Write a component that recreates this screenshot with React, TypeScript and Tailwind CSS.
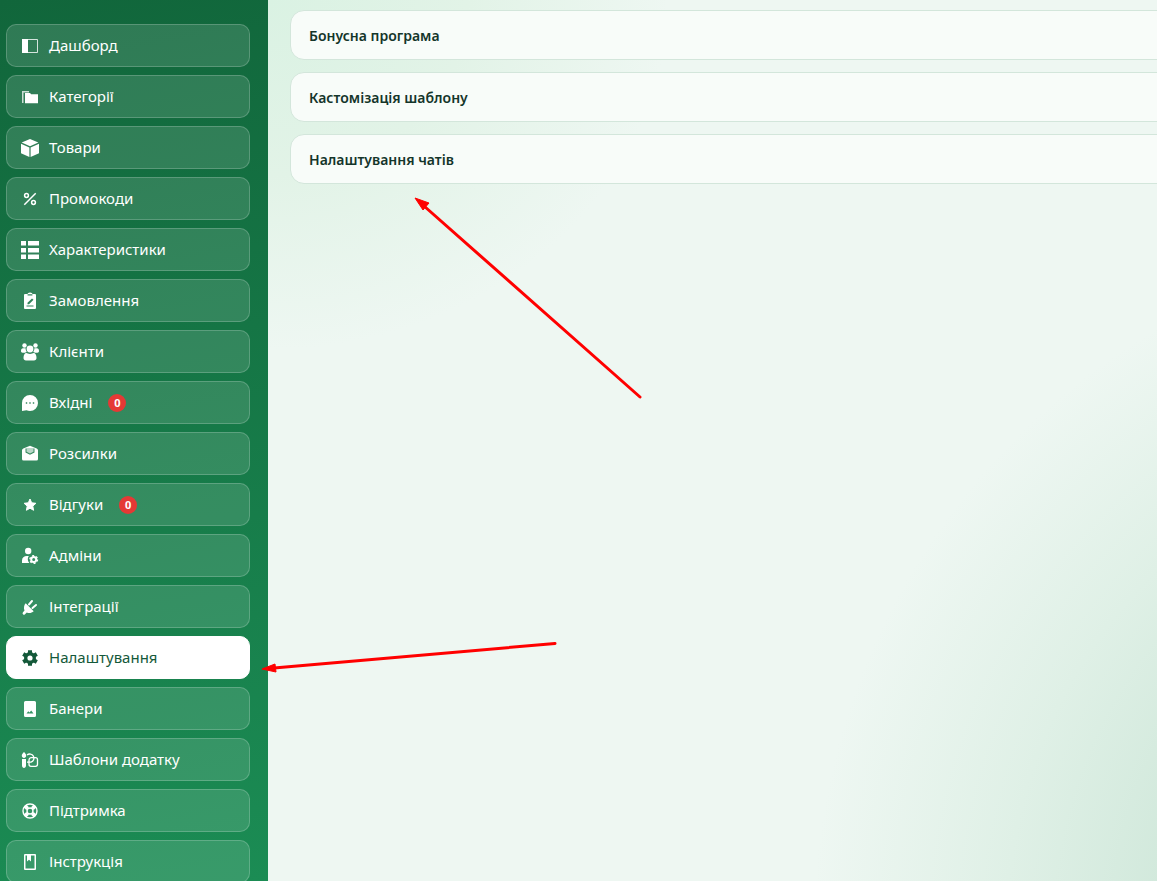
import { useState } from 'react'
import type { ReactNode } from 'react'
import clsx from 'clsx'

interface NavItem {
  id: string
  label: string
  icon: ReactNode
  badge?: number
}

// 18x18 glyph drawn with the current text color
function Glyph({ children }: { children: ReactNode }) {
  return (
    <svg viewBox="0 0 18 18" className="size-[18px]" fill="currentColor" aria-hidden="true">
      {children}
    </svg>
  )
}

const navItems: NavItem[] = [
  {
    id: 'dashboard',
    label: 'Дашборд',
    icon: (
      <Glyph>
        <path d="M1 2h6v14H1z" />
        <path d="M1.5 2.5h15v13h-15z" fill="none" stroke="currentColor" strokeOpacity=".8" />
      </Glyph>
    ),
  },
  {
    id: 'categories',
    label: 'Категорії',
    icon: (
      <Glyph>
        <path d="M1 3h7v1.500H2.500V15H1z" opacity=".75" />
        <path d="M4 5h5l1.200 1.300H17V15.300H4z" />
      </Glyph>
    ),
  },
  {
    id: 'products',
    label: 'Товари',
    icon: (
      <Glyph>
        <path d="M9 0l8.300 3.600L9 7.200.7 3.600zM0 4.800l8.400 3.600V18L0 14.200zM18 4.800L9.600 8.400V18l8.400-3.800z" />
      </Glyph>
    ),
  },
  {
    id: 'promo',
    label: 'Промокоди',
    icon: (
      <Glyph>
        <g fill="none" stroke="currentColor" strokeWidth="1.500">
          <circle cx="5.500" cy="5.500" r="1.900" />
          <circle cx="12.500" cy="12.500" r="1.900" />
          <path d="M14.700 3.300L3.300 14.700" />
        </g>
      </Glyph>
    ),
  },
  {
    id: 'features',
    label: 'Характеристики',
    icon: (
      <Glyph>
        <path d="M0 0h5v4.500H0zM7 0h11v4.500H7zM0 7h5v4.500H0zM7 7h11v4.500H7zM0 13.500h5V18H0zM7 13.500h11V18H7z" />
      </Glyph>
    ),
  },
  {
    id: 'orders',
    label: 'Замовлення',
    icon: (
      <Glyph>
        <path
          fillRule="evenodd"
          d="M4 2h2.500a2.500 1.500 0 0 1 5 0H14a1 1 0 0 1 1 1v13a1 1 0 0 1-1 1H4a1 1 0 0 1-1-1V3a1 1 0 0 1 1-1zm2.600.2v1.200h4.800V2.200zM11 6.500l-4.500 4.300v1.400H8L12.500 7.800zM5.500 13.500v1h7v-1z"
        />
      </Glyph>
    ),
  },
  {
    id: 'clients',
    label: 'Клієнти',
    icon: (
      <Glyph>
        <circle cx="3.500" cy="2.500" r="2.200" />
        <circle cx="14.500" cy="2.500" r="2.200" />
        <circle cx="9" cy="6" r="3.400" />
        <path d="M0 8c0-1.700.8-2.700 2-2.700h2.600c0 1.600.4 2.700 1.300 3.600-.7 0-1.300.3-1.900.8H1.600C.6 9.700 0 9 0 8zM18 8c0-1.700-.8-2.700-2-2.700h-2.600c0 1.600-.4 2.700-1.300 3.600.7 0 1.300.3 1.900.8h2.400c1 0 1.600-.7 1.600-1.700z" />
        <path d="M2.500 15c0-3 1-5 3-5 .8 0 1.600 1 3.500 1s2.700-1 3.500-1c2 0 3 2 3 5 0 1.400-1 2.500-2.500 2.500H5c-1.500 0-2.500-1.100-2.500-2.500z" />
      </Glyph>
    ),
  },
  {
    id: 'inbox',
    label: 'Вхідні',
    badge: 0,
    icon: (
      <Glyph>
        <path
          fillRule="evenodd"
          d="M9 1a8 8 0 1 1 0 16q-2 0-3.500-.8L1 17V9a8 8 0 0 1 8-8zM4.800 8.300v1.400h1.400V8.300zm3.500 0v1.400h1.400V8.300zm3.500 0v1.400h1.400V8.300z"
        />
      </Glyph>
    ),
  },
  {
    id: 'mailing',
    label: 'Розсилки',
    icon: (
      <Glyph>
        <path
          fillRule="evenodd"
          d="M9 .7l6.700 2.800A2 2 0 0 1 17 5.300V14a1.500 1.500 0 0 1-1.500 1.500h-13A1.500 1.500 0 0 1 1 14V5.300a2 2 0 0 1 1.300-1.800zM4.500 3.500v4L9 9.800l4.500-2.300v-4z"
        />
        <path d="M5.500 3.500h7v3.300L9 8.600 5.500 6.800z" opacity=".65" />
      </Glyph>
    ),
  },
  {
    id: 'reviews',
    label: 'Відгуки',
    badge: 0,
    icon: (
      <Glyph>
        <path
          d="M9 3l1.700 3.800 4.200.5-3.100 2.800.8 4.200L9 12.200l-3.600 2.100.8-4.200-3.100-2.800 4.200-.5z"
          stroke="currentColor"
          strokeLinejoin="round"
        />
      </Glyph>
    ),
  },
  {
    id: 'admins',
    label: 'Адміни',
    icon: (
      <Glyph>
        <circle cx="7.200" cy="4" r="3.200" />
        <path d="M1 16v-2.500C1 10.500 3 9 6 9h1.800a6 6 0 0 0 .5 7z" />
        <circle cx="12.700" cy="12.500" r="2.500" fill="none" stroke="currentColor" strokeWidth="2" />
        <circle cx="12.700" cy="12.500" r="3.800" fill="none" stroke="currentColor" strokeWidth="1.400" strokeDasharray="2 1.980" />
      </Glyph>
    ),
  },
  {
    id: 'integrations',
    label: 'Інтеграції',
    icon: (
      <Glyph>
        <path d="M4.700 5.300l8 8c-2 1.800-4.700 2.200-6.900 1.200L4 16.200a1 1 0 0 1-2-2l1.500-1.700c-1-2.200-.6-5.300 1.200-7.200z" />
        <path
          d="M8 6.500l3-3.500M11.500 10l3.500-3"
          fill="none"
          stroke="currentColor"
          strokeWidth="2"
          strokeLinecap="round"
        />
      </Glyph>
    ),
  },
  {
    id: 'settings',
    label: 'Налаштування',
    icon: (
      <Glyph>
        <circle cx="9" cy="9" r="4.300" fill="none" stroke="currentColor" strokeWidth="3.400" />
        <path
          d="M9 1.200v3M9 13.800v3M2.200 5.100l2.600 1.500M13.200 11.400l2.600 1.500M2.200 12.900l2.600-1.500M13.200 6.600l2.600-1.500"
          fill="none"
          stroke="currentColor"
          strokeWidth="4"
        />
      </Glyph>
    ),
  },
  {
    id: 'banners',
    label: 'Банери',
    icon: (
      <Glyph>
        <path
          fillRule="evenodd"
          d="M4.500 1h9A1.500 1.500 0 0 1 15 2.500v13a1.500 1.500 0 0 1-1.500 1.500h-9A1.500 1.500 0 0 1 3 15.500v-13A1.500 1.500 0 0 1 4.500 1zM5.500 13.500h7l-2.300-3-1.700 2-1.200-1.200z"
        />
      </Glyph>
    ),
  },
  {
    id: 'templates',
    label: 'Шаблони додатку',
    icon: (
      <Glyph>
        <path d="M3 1c1.500 1.500 2.200 2.600 2.200 3.700S4.200 7 3 7 .8 5.800.8 4.700 1.500 2.500 3 1zM1 8h4v6.500c0 1.500-.9 2.500-2 2.500s-2-1-2-2.500z" />
        <g fill="none" stroke="currentColor" strokeWidth="1.300">
          <path d="M6 4a4.200 4.200 0 1 1 4 7.200H6" />
          <path d="M10 6.700h4.500a2 2 0 0 1 2 2v4.600a2 2 0 0 1-2 2H10a2 2 0 0 1-2-2V9a2.300 2.300 0 0 1 2-2.300z" />
        </g>
      </Glyph>
    ),
  },
  {
    id: 'support',
    label: 'Підтримка',
    icon: (
      <Glyph>
        <g fill="none" stroke="currentColor">
          <circle cx="9" cy="9" r="7" strokeWidth="1.400" />
          <circle cx="9" cy="9" r="3" strokeWidth="1.400" />
          <path d="M3.900 3.900l2.700 2.700M14.100 3.900l-2.700 2.700M3.900 14.100l2.700-2.700M14.100 14.100l-2.700-2.700" strokeWidth="3.800" />
        </g>
      </Glyph>
    ),
  },
  {
    id: 'manual',
    label: 'Інструкція',
    icon: (
      <Glyph>
        <path
          fillRule="evenodd"
          d="M4 1h10a1 1 0 0 1 1 1v14a1 1 0 0 1-1 1H4a1 1 0 0 1-1-1V2a1 1 0 0 1 1-1zm.5 1.500v13h9v-13z"
        />
        <path d="M6 2h4v6.500l-2-1.700-2 1.700z" />
      </Glyph>
    ),
  },
]

const sections = ['Бонусна програма', 'Кастомізація шаблону', 'Налаштування чатів']

function Sidebar() {
  const [active, setActive] = useState('settings')

  return (
    <aside className="w-[268px] shrink-0 overflow-hidden bg-linear-[170deg,#11663b,#1b8c54] pt-6 pr-[18px] pl-1.5">
      <nav className="flex flex-col gap-2">
        {navItems.map((item) => (
          <a
            key={item.id}
            href={`#${item.id}`}
            onClick={() => setActive(item.id)}
            aria-current={active === item.id ? 'page' : undefined}
            className={clsx(
              'flex h-[43px] shrink-0 items-center gap-2.5 rounded-[10px] border px-3.5 text-[15px] leading-[23px]',
              active === item.id
                ? 'border-white bg-white text-[#14593a]'
                : 'border-white/20 bg-white/13 text-white',
            )}
          >
            {item.icon}
            <span>{item.label}</span>
            {item.badge !== undefined && (
              <span className="ml-1.5 flex size-[18px] items-center justify-center rounded-full bg-[#e53935] text-[11px] font-bold text-white">
                {item.badge}
              </span>
            )}
          </a>
        ))}
      </nav>
    </aside>
  )
}

// Red pointers lying over the page
function Pointers() {
  return (
    <svg className="pointer-events-none absolute inset-0 h-full w-full" fill="red" stroke="red" aria-hidden="true">
      <path d="M640 397L424 206" strokeWidth="3" strokeLinecap="round" />
      <path d="M415 198l14 5-6 7z" strokeWidth="1" />
      <path d="M555 643.500L274 668" strokeWidth="3" strokeLinecap="round" />
      <path d="M262 669l13-5 1 8z" strokeWidth="1" />
    </svg>
  )
}

export default function App() {
  return (
    <div className="relative flex h-screen overflow-hidden bg-[#eef7f2] font-['Segoe_UI','Noto_Sans',sans-serif]">
      <Sidebar />
      <main className="flex min-w-0 flex-1 flex-col gap-3 overflow-hidden bg-[radial-gradient(400px_350px_at_0_0,#daf2e3,#e2f3e7_50%,transparent),radial-gradient(690px_690px_at_139%_105%,#b9ddc9,#d2e9dc_50%,#dff0e6_72%,transparent)] pt-2.5 pl-[22px]">
        {sections.map((title) => (
          <button
            key={title}
            type="button"
            className="-mr-6 h-[50px] shrink-0 rounded-[14px] border border-[#d3e6db] bg-[#f8fcf9] px-[18px] text-left text-[14px] font-semibold text-[#14352a]"
          >
            {title}
          </button>
        ))}
      </main>
      <Pointers />
    </div>
  )
}
